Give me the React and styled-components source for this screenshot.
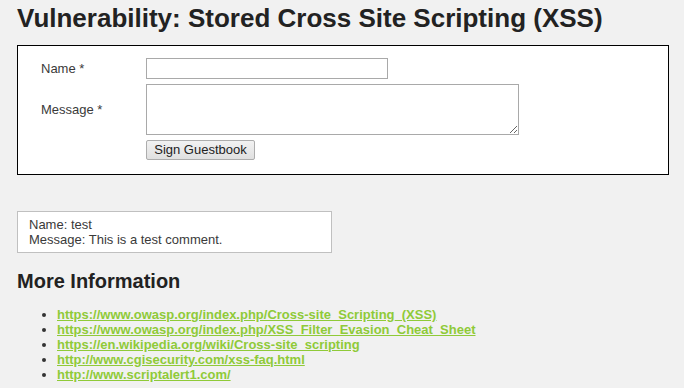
import styled, { createGlobalStyle } from "styled-components";

const GlobalStyle = createGlobalStyle`
  html, body {
    margin: 0;
    padding: 0;
    background: #f1f1f1;
  }
  body {
    font-family: "Liberation Sans", Arial, sans-serif;
    font-size: 13px;
    color: #333;
  }
`;

const links = [
  "https://www.owasp.org/index.php/Cross-site_Scripting_(XSS)",
  "https://www.owasp.org/index.php/XSS_Filter_Evasion_Cheat_Sheet",
  "https://en.wikipedia.org/wiki/Cross-site_scripting",
  "http://www.cgisecurity.com/xss-faq.html",
  "http://www.scriptalert1.com/",
];

const App = () => {
  return (
    <>
      <GlobalStyle />
      <StPage>
        <StTitle>Vulnerability: Stored Cross Site Scripting (XSS)</StTitle>

        <StCodeArea>
          <StForm onSubmit={(e) => e.preventDefault()}>
            <StLabel>Name *</StLabel>
            <StInput type="text" maxLength={10} />
            <StLabel>Message *</StLabel>
            <StTextarea maxLength={50} />
            <span />
            <div>
              <StButton type="submit">Sign Guestbook</StButton>
            </div>
          </StForm>
        </StCodeArea>

        <StComments>
          <div>Name: test</div>
          <div>Message: This is a test comment.</div>
        </StComments>

        <StSubTitle>More Information</StSubTitle>
        <StLinkList>
          {links.map((link) => (
            <li key={link}>
              <StLink href={link} onClick={(e) => e.preventDefault()}>
                {link}
              </StLink>
            </li>
          ))}
        </StLinkList>
      </StPage>
    </>
  );
};

export default App;

const StPage = styled.div`
  padding: 3px 15px 0 17px;
`;

const StTitle = styled.h1`
  margin: 0 0 12px;
  font-size: 26px;
  line-height: 30px;
  font-weight: bold;
  color: #222;
`;

const StCodeArea = styled.div`
  background: #fff;
  border: 1px solid #000;
  padding: 12px 20px 14px 23px;
`;

const StForm = styled.form`
  display: grid;
  grid-template-columns: 105px auto;
  row-gap: 5px;
  align-items: center;
  justify-items: start;
  margin: 0;
`;

const StLabel = styled.label`
  color: #3a3a3a;
  font-size: 13px;
`;

const StInput = styled.input`
  box-sizing: border-box;
  width: 242px;
  height: 21px;
  border: 1px solid #a9a9a9;
  background: #fff;
  padding: 1px 3px;
  font-family: inherit;
  font-size: 13px;
`;

const StTextarea = styled.textarea`
  box-sizing: border-box;
  width: 373px;
  height: 51px;
  border: 1px solid #a9a9a9;
  background: #fff;
  padding: 2px;
  font-family: inherit;
  font-size: 13px;
  display: block;
`;

const StButton = styled.button`
  box-sizing: border-box;
  width: 109px;
  height: 20px;
  padding: 0 6px;
  border: 1px solid #adadad;
  border-radius: 2px;
  background: linear-gradient(#f2f2f2, #e0e0e0);
  color: #222;
  font-family: inherit;
  font-size: 13px;
  line-height: 18px;
  cursor: pointer;
`;

const StComments = styled.div`
  margin-top: 36px;
  width: 315px;
  box-sizing: border-box;
  background: #fff;
  border: 1px solid #c0c0c0;
  padding: 5px 11px;
  line-height: 15px;
  color: #3a3a3a;
`;

const StSubTitle = styled.h2`
  margin: 17px 0 14px;
  font-size: 20px;
  line-height: 23px;
  font-weight: bold;
  color: #222;
`;

const StLinkList = styled.ul`
  margin: 0;
  padding-left: 40px;
  line-height: 15px;
  color: #333;
`;

const StLink = styled.a`
  color: #8fca38;
  font-weight: bold;
  text-decoration: underline;
`;
